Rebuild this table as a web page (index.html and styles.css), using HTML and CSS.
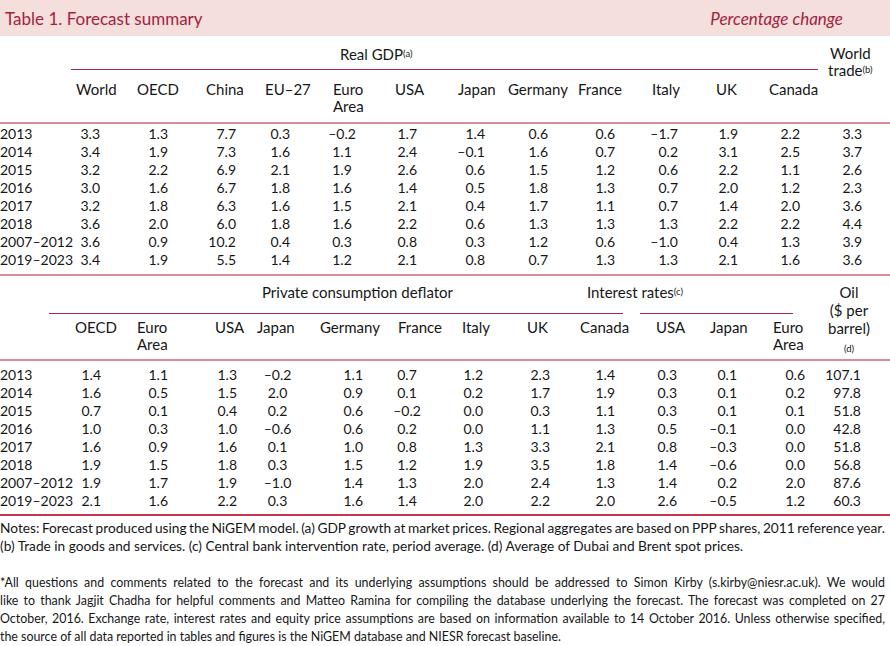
FILE: index.html
```html
<!DOCTYPE html>
<html lang="en">
<head>
<meta charset="utf-8">
<title>Table 1. Forecast summary</title>
<link rel="stylesheet" href="styles.css">
</head>
<body>
<div class="page">
  <header class="titlebar">
    <h1 class="title">Table 1. Forecast summary</h1>
    <span class="unit">Percentage change</span>
  </header>

  <section class="tbl t1">
    <div class="head">
      <div class="grp-text gdp-text">Real GDP<sup>(a)</sup></div>
      <div class="grp-rule gdp-rule"></div>
      <div class="side">World<br>trade<sup>(b)</sup></div>
      <div class="stub"></div>
      <div class="lab">World</div>
      <div class="lab">OECD</div>
      <div class="lab">China</div>
      <div class="lab">EU–27</div>
      <div class="lab">Euro<br>Area</div>
      <div class="lab">USA</div>
      <div class="lab">Japan</div>
      <div class="lab">Germany</div>
      <div class="lab">France</div>
      <div class="lab">Italy</div>
      <div class="lab">UK</div>
      <div class="lab">Canada</div>
    </div>
    <div class="body">
      <div class="row"><span>2013</span><span>3.3</span><span>1.3</span><span>7.7</span><span>0.3</span><span>–0.2</span><span>1.7</span><span>1.4</span><span>0.6</span><span>0.6</span><span>–1.7</span><span>1.9</span><span>2.2</span><span>3.3</span></div>
      <div class="row"><span>2014</span><span>3.4</span><span>1.9</span><span>7.3</span><span>1.6</span><span>1.1</span><span>2.4</span><span>–0.1</span><span>1.6</span><span>0.7</span><span>0.2</span><span>3.1</span><span>2.5</span><span>3.7</span></div>
      <div class="row"><span>2015</span><span>3.2</span><span>2.2</span><span>6.9</span><span>2.1</span><span>1.9</span><span>2.6</span><span>0.6</span><span>1.5</span><span>1.2</span><span>0.6</span><span>2.2</span><span>1.1</span><span>2.6</span></div>
      <div class="row"><span>2016</span><span>3.0</span><span>1.6</span><span>6.7</span><span>1.8</span><span>1.6</span><span>1.4</span><span>0.5</span><span>1.8</span><span>1.3</span><span>0.7</span><span>2.0</span><span>1.2</span><span>2.3</span></div>
      <div class="row"><span>2017</span><span>3.2</span><span>1.8</span><span>6.3</span><span>1.6</span><span>1.5</span><span>2.1</span><span>0.4</span><span>1.7</span><span>1.1</span><span>0.7</span><span>1.4</span><span>2.0</span><span>3.6</span></div>
      <div class="row"><span>2018</span><span>3.6</span><span>2.0</span><span>6.0</span><span>1.8</span><span>1.6</span><span>2.2</span><span>0.6</span><span>1.3</span><span>1.3</span><span>1.3</span><span>2.2</span><span>2.2</span><span>4.4</span></div>
      <div class="row"><span>2007–2012</span><span>3.6</span><span>0.9</span><span>10.2</span><span>0.4</span><span>0.3</span><span>0.8</span><span>0.3</span><span>1.2</span><span>0.6</span><span>–1.0</span><span>0.4</span><span>1.3</span><span>3.9</span></div>
      <div class="row"><span>2019–2023</span><span>3.4</span><span>1.9</span><span>5.5</span><span>1.4</span><span>1.2</span><span>2.1</span><span>0.8</span><span>0.7</span><span>1.3</span><span>1.3</span><span>2.1</span><span>1.6</span><span>3.6</span></div>
    </div>
  </section>

  <section class="tbl t2">
    <div class="head">
      <div class="grp-text pcd-text">Private consumption deflator</div>
      <div class="grp-text ir-text">Interest rates<sup>(c)</sup></div>
      <div class="grp-rule pcd-rule"></div>
      <div class="grp-rule ir-rule"></div>
      <div class="side">Oil<br>($ per<br>barrel)<br><span class="note-mark">(d)</span></div>
      <div class="stub"></div>
      <div class="lab">OECD</div>
      <div class="lab">Euro<br>Area</div>
      <div class="lab">USA</div>
      <div class="lab">Japan</div>
      <div class="lab">Germany</div>
      <div class="lab">France</div>
      <div class="lab">Italy</div>
      <div class="lab">UK</div>
      <div class="lab">Canada</div>
      <div class="lab">USA</div>
      <div class="lab">Japan</div>
      <div class="lab">Euro<br>Area</div>
    </div>
    <div class="body">
      <div class="row"><span>2013</span><span>1.4</span><span>1.1</span><span>1.3</span><span>–0.2</span><span>1.1</span><span>0.7</span><span>1.2</span><span>2.3</span><span>1.4</span><span>0.3</span><span>0.1</span><span>0.6</span><span>107.1</span></div>
      <div class="row"><span>2014</span><span>1.6</span><span>0.5</span><span>1.5</span><span>2.0</span><span>0.9</span><span>0.1</span><span>0.2</span><span>1.7</span><span>1.9</span><span>0.3</span><span>0.1</span><span>0.2</span><span>97.8</span></div>
      <div class="row"><span>2015</span><span>0.7</span><span>0.1</span><span>0.4</span><span>0.2</span><span>0.6</span><span>–0.2</span><span>0.0</span><span>0.3</span><span>1.1</span><span>0.3</span><span>0.1</span><span>0.1</span><span>51.8</span></div>
      <div class="row"><span>2016</span><span>1.0</span><span>0.3</span><span>1.0</span><span>–0.6</span><span>0.6</span><span>0.2</span><span>0.0</span><span>1.1</span><span>1.3</span><span>0.5</span><span>–0.1</span><span>0.0</span><span>42.8</span></div>
      <div class="row"><span>2017</span><span>1.6</span><span>0.9</span><span>1.6</span><span>0.1</span><span>1.0</span><span>0.8</span><span>1.3</span><span>3.3</span><span>2.1</span><span>0.8</span><span>–0.3</span><span>0.0</span><span>51.8</span></div>
      <div class="row"><span>2018</span><span>1.9</span><span>1.5</span><span>1.8</span><span>0.3</span><span>1.5</span><span>1.2</span><span>1.9</span><span>3.5</span><span>1.8</span><span>1.4</span><span>–0.6</span><span>0.0</span><span>56.8</span></div>
      <div class="row"><span>2007–2012</span><span>1.9</span><span>1.7</span><span>1.9</span><span>–1.0</span><span>1.4</span><span>1.3</span><span>2.0</span><span>2.4</span><span>1.3</span><span>1.4</span><span>0.2</span><span>2.0</span><span>87.6</span></div>
      <div class="row"><span>2019–2023</span><span>2.1</span><span>1.6</span><span>2.2</span><span>0.3</span><span>1.6</span><span>1.4</span><span>2.0</span><span>2.2</span><span>2.0</span><span>2.6</span><span>–0.5</span><span>1.2</span><span>60.3</span></div>
    </div>
  </section>

  <footer class="notes">
    <p class="notes-text">
      <span class="ln">Notes: Forecast produced using the NiGEM model. (a) GDP growth at market prices. Regional aggregates are based on PPP shares, 2011 reference year.</span>
      <span class="ln ln-last">(b) Trade in goods and services. (c) Central bank intervention rate, period average. (d) Average of Dubai and Brent spot prices.</span>
    </p>
    <p class="credit">
      <span class="ln">*All questions and comments related to the forecast and its underlying assumptions should be addressed to Simon Kirby (s.kirby@niesr.ac.uk). We would</span>
      <span class="ln">like to thank Jagjit Chadha for helpful comments and Matteo Ramina for compiling the database underlying the forecast. The forecast was completed on 27</span>
      <span class="ln">October, 2016. Exchange rate, interest rates and equity price assumptions are based on information available to 14 October 2016. Unless otherwise specified,</span>
      <span class="ln ln-last">the source of all data reported in tables and figures is the NiGEM database and NIESR forecast baseline.</span>
    </p>
  </footer>
</div>
</body>
</html>
```
FILE: styles.css
```css
* {
  box-sizing: border-box;
  margin: 0;
  padding: 0;
}

body {
  margin: 0;
  background: #ffffff;
  color: #161616;
  font-family: Lato, "Liberation Sans", sans-serif;
  font-size: 14px;
  line-height: 18px;
}

.page {
  width: 890px;
}

/* title bar */
.titlebar {
  height: 36px;
  background: #f4dfdd;
  display: flex;
  justify-content: space-between;
  align-items: flex-start;
  padding: 8px 47px 0 5px;
}

.title {
  font-size: 17px;
  font-weight: 400;
  line-height: 22px;
  color: #a3223e;
}

.unit {
  font-size: 17px;
  font-style: italic;
  line-height: 22px;
  color: #a3223e;
}

sup {
  font-size: 9.5px;
  line-height: 0;
  vertical-align: 3px;
}

/* shared table pieces */
.head {
  display: grid;
  font-size: 15px;
  border-bottom: 2px solid #d88e9a;
}

.grp-text {
  grid-row: 1;
  white-space: nowrap;
}

.grp-rule {
  grid-row: 2;
  background: #9e2b45;
}

.stub {
  grid-row: 3;
  grid-column: 1;
}

.lab {
  grid-row: 3;
  line-height: 17px;
  white-space: nowrap;
}

.side {
  grid-row: 1 / 4;
  justify-self: start;
  text-align: center;
  white-space: nowrap;
}

.row {
  display: grid;
  height: 18px;
  white-space: nowrap;
}

.row > span {
  text-align: right;
}

.row > span:first-child {
  text-align: left;
}

/* table 1: real GDP */
.t1 .head {
  grid-template-columns: 76px 61px 69px 59px 68px 62px 63px 50px 70px 74px 64px 53px 59px 62px;
  grid-template-rows: 33px 1px 52px;
}

.gdp-text {
  grid-column: 2 / 14;
  padding: 9px 0 0 264px;
}

.gdp-rule {
  grid-column: 2 / 14;
  margin: 0 10px 0 -5px;
}

.t1 .side {
  grid-column: 14;
  padding-top: 9px;
  line-height: 17px;
}

.t1 .lab {
  padding-top: 11px;
}

.t1 .body {
  padding: 1px 0 5px;
  border-bottom: 2px solid #d88e9a;
}

.t1 .row {
  grid-template-columns: 70px 30px 68px 68px 54px 104px 23px 68px 63px 67px 63px 60px 62px 62px;
}

.t1 .row > span:nth-child(6) {
  text-align: center;
}

/* table 2: deflator, interest rates, oil */
.t2 .head {
  grid-template-columns: 75px 62px 78px 42px 63px 78px 64px 65px 53px 76px 54px 63px 55px 62px;
  grid-template-rows: 37px 1px 45px;
}

.pcd-text {
  grid-column: 2 / 10;
  padding: 7px 0 0 187px;
}

.ir-text {
  grid-column: 10 / 14;
  padding: 7px 0 0 7px;
}

.pcd-rule {
  grid-column: 2 / 11;
  margin: 0 33px 0 -26px;
}

.ir-rule {
  grid-column: 11 / 14;
  margin: 0 35px 0 -16px;
}

.t2 .side {
  grid-column: 14;
  padding-top: 7px;
  line-height: 18px;
}

.note-mark {
  display: inline-block;
  font-size: 9.5px;
  line-height: 12px;
}

.t2 .lab {
  padding-top: 5px;
}

.t2 .body {
  padding: 5px 0 4px;
  border-bottom: 2px solid #c8374e;
}

.t2 .row {
  grid-template-columns: 70px 31px 67px 69px 81px 45px 88px 32px 67px 65px 62px 60px 68px 56px;
}

.t2 .row > span:nth-child(5),
.t2 .row > span:nth-child(7) {
  text-align: center;
}

/* notes */
.notes {
  width: 885px;
}

.notes-text {
  margin-top: 3px;
  font-size: 13.7px;
}

.notes-text .ln {
  word-spacing: -1.2px;
}

.credit {
  margin-top: 19px;
  font-size: 12.4px;
}

.ln {
  display: block;
  white-space: nowrap;
  text-align: justify;
  text-align-last: justify;
}

.notes-text .ln-last,
.ln-last {
  text-align-last: left;
  word-spacing: 0;
}
```
